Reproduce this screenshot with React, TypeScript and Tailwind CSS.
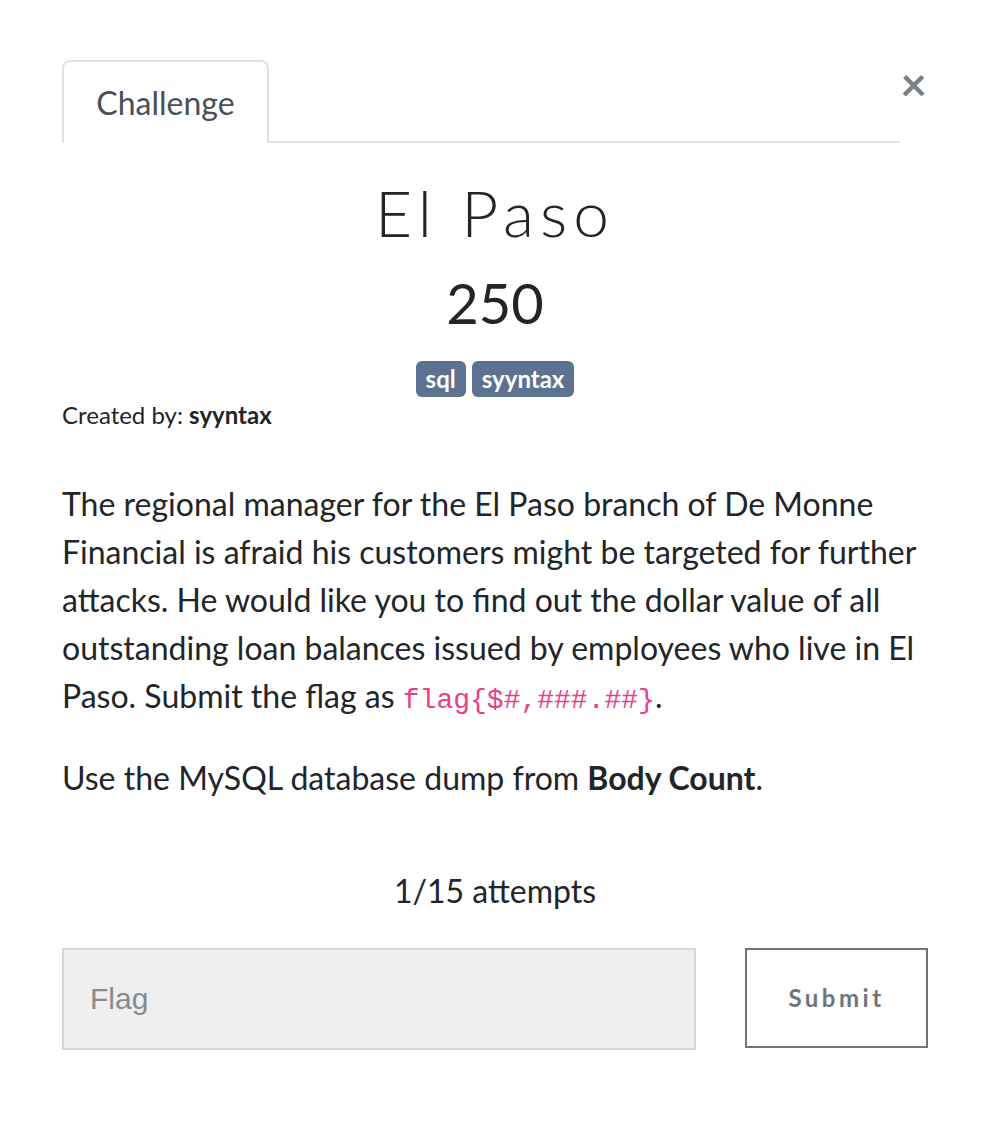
export default function App() {
  return (
    <main className="min-h-screen w-[990px] bg-white font-['Lato','Liberation_Sans',sans-serif] text-[#212529]">
      <div className="pl-[62px] pr-[62px] pt-[60px] pb-[94px]">
        {/* Tabs + close */}
        <div className="flex items-start">
          <div className="flex w-[839px] border-b-2 border-[#dee2e6]">
            <div className="-mb-[2px] flex h-[83px] w-[207px] items-center justify-center rounded-t-[8px] border-2 border-b-0 border-[#dee2e6] bg-white text-[32px] text-[#495057]">
              Challenge
            </div>
          </div>
          <button className="ml-auto mt-[1px] mr-[1px] text-[46px] leading-[46px] font-bold text-[#7a7f85]">
            ×
          </button>
        </div>

        {/* Title */}
        <div className="mt-[32px] flex flex-col items-center">
          <h2 className="text-[64px] leading-[76px] font-light tracking-[6px] text-[#212529]">
            El Paso
          </h2>
          <h3 className="mt-[19px] text-[56px] leading-[66px] font-normal text-[#212529]">
            250
          </h3>
          <div className="mt-[25px] flex gap-[6px]">
            <span className="rounded-[6px] bg-[#5c7290] px-[10px] h-[36px] leading-[36px] text-[24px] font-bold text-white">
              sql
            </span>
            <span className="rounded-[6px] bg-[#5c7290] px-[10px] h-[36px] leading-[36px] text-[24px] font-bold text-white">
              syyntax
            </span>
          </div>
        </div>
        <p className="mt-[4px] text-[24px] leading-[28px]">
          Created by: <span className="font-bold">syyntax</span>
        </p>

        {/* Description */}
        <div className="mt-[51px] text-[32px] leading-[48px]">
          <p>
            The regional manager for the El Paso branch of De Monne Financial is afraid his customers might
            be targeted for further attacks. He would like you to find out the dollar value of all outstanding
            loan balances issued by employees who live in El Paso. Submit the flag as{" "}
            <code className="font-['Liberation_Mono',monospace] text-[28px] leading-none text-[#e83e8c]">
              flag{"{"}$#,###.##{"}"}
            </code>
            .
          </p>
          <p className="mt-[34px]">
            Use the MySQL database dump from <span className="font-bold">Body Count</span>.
          </p>
        </div>

        {/* Attempts */}
        <p className="mt-[65px] text-center text-[32px] leading-[48px]">1/15 attempts</p>

        {/* Submit row */}
        <div className="mt-[33px] flex items-start">
          <input
            placeholder="Flag"
            className="h-[102px] w-[634px] border-2 border-[#d3d7dc] bg-[#efefef] px-[26px] font-['Liberation_Sans',sans-serif] text-[30px] text-[#495057] outline-none placeholder:text-[#868b91]"
          />
          <button className="ml-auto h-[100px] w-[183px] border-2 border-[#6c757d] bg-white text-[24px] font-bold tracking-[3.5px] text-[#6c757d]">
            Submit
          </button>
        </div>
      </div>
    </main>
  );
}
